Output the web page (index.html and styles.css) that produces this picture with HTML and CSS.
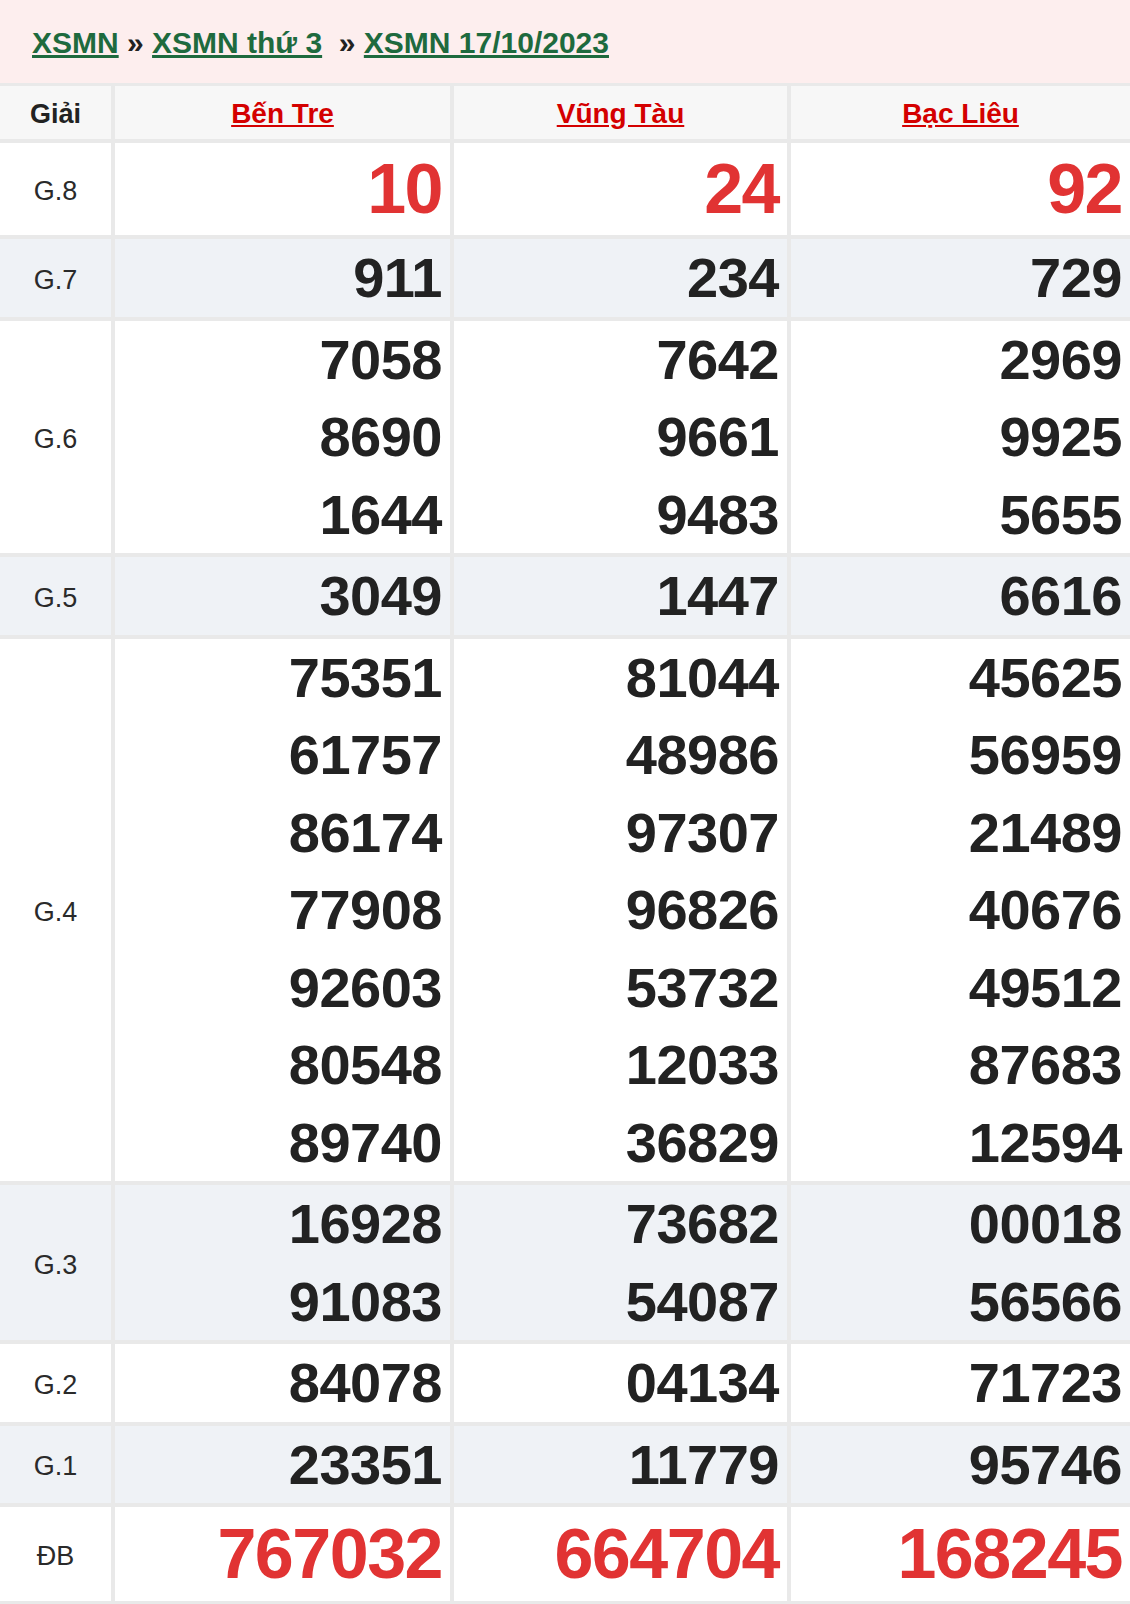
FILE: index.html
```html
<!DOCTYPE html>
<html lang="vi">
<head>
<meta charset="utf-8">
<title>XSMN 17/10/2023</title>
<link rel="stylesheet" href="styles.css">
</head>
<body>
<div class="crumbs"><a href="#">XSMN</a><span class="sep"> » </span><a href="#">XSMN thứ 3</a><span class="sep">&nbsp; » </span><a href="#">XSMN 17/10/2023</a></div>
<div class="board">
  <div class="cell head lbl"><b>Giải</b></div>
  <div class="cell head"><a href="#">Bến Tre</a></div>
  <div class="cell head"><a href="#">Vũng Tàu</a></div>
  <div class="cell head"><a href="#">Bạc Liêu</a></div>

  <div class="cell lbl">G.8</div>
  <div class="cell num big"><div>10</div></div>
  <div class="cell num big"><div>24</div></div>
  <div class="cell num big"><div>92</div></div>

  <div class="cell lbl alt">G.7</div>
  <div class="cell num alt"><div>911</div></div>
  <div class="cell num alt"><div>234</div></div>
  <div class="cell num alt"><div>729</div></div>

  <div class="cell lbl">G.6</div>
  <div class="cell num"><div>7058</div><div>8690</div><div>1644</div></div>
  <div class="cell num"><div>7642</div><div>9661</div><div>9483</div></div>
  <div class="cell num"><div>2969</div><div>9925</div><div>5655</div></div>

  <div class="cell lbl alt">G.5</div>
  <div class="cell num alt"><div>3049</div></div>
  <div class="cell num alt"><div>1447</div></div>
  <div class="cell num alt"><div>6616</div></div>

  <div class="cell lbl">G.4</div>
  <div class="cell num"><div>75351</div><div>61757</div><div>86174</div><div>77908</div><div>92603</div><div>80548</div><div>89740</div></div>
  <div class="cell num"><div>81044</div><div>48986</div><div>97307</div><div>96826</div><div>53732</div><div>12033</div><div>36829</div></div>
  <div class="cell num"><div>45625</div><div>56959</div><div>21489</div><div>40676</div><div>49512</div><div>87683</div><div>12594</div></div>

  <div class="cell lbl alt">G.3</div>
  <div class="cell num alt"><div>16928</div><div>91083</div></div>
  <div class="cell num alt"><div>73682</div><div>54087</div></div>
  <div class="cell num alt"><div>00018</div><div>56566</div></div>

  <div class="cell lbl">G.2</div>
  <div class="cell num"><div>84078</div></div>
  <div class="cell num"><div>04134</div></div>
  <div class="cell num"><div>71723</div></div>

  <div class="cell lbl alt">G.1</div>
  <div class="cell num alt"><div>23351</div></div>
  <div class="cell num alt"><div>11779</div></div>
  <div class="cell num alt"><div>95746</div></div>

  <div class="cell lbl">ĐB</div>
  <div class="cell num big db"><div>767032</div></div>
  <div class="cell num big db"><div>664704</div></div>
  <div class="cell num big db"><div>168245</div></div>
</div>
</body>
</html>
```
FILE: styles.css
```css
* { box-sizing: border-box; }
html, body { margin: 0; padding: 0; background: #fff; }
body {
  font-family: "Liberation Sans", Arial, sans-serif;
  color: #222;
  width: 1130px;
}
.crumbs {
  height: 83px;
  background: #fdeeee;
  padding: 2px 0 0 32px;
  line-height: 81px;
  font-size: 30px;
  font-weight: bold;
  white-space: nowrap;
}
.crumbs a { color: #1e6a3e; text-decoration: underline; }
.crumbs .sep { color: #222; }
.board {
  display: grid;
  grid-template-columns: 111px 335px 333px 1fr;
  gap: 4px;
  background: #e9e9e9;
  border-top: 3px solid #e9e9e9;
  border-bottom: 4px solid #e9e9e9;
}
.cell { background: #fff; }
.cell.alt { background: #eff2f6; }
.cell.head {
  background: #f7f7f7;
  height: 53px;
  display: flex;
  align-items: center;
  justify-content: center;
  font-size: 28px;
  font-weight: bold;
  padding-top: 3px;
}
.cell.head a { color: #d40000; text-decoration: underline; }
.cell.head b { color: #222; }
.cell.lbl {
  display: flex;
  align-items: center;
  justify-content: center;
  font-size: 27px;
  padding-top: 5px;
  color: #2a2a2a;
}
.cell.head.lbl { font-size: 27px; padding-top: 3px; }
.cell.num {
  text-align: right;
  padding-right: 8px;
  font-weight: bold;
  font-size: 56px;
  line-height: 77.5px;
  letter-spacing: -0.5px;
}
.cell.big {
  font-size: 70px;
  line-height: 92px;
  letter-spacing: -1.5px;
  color: #e13333;
}
.cell.big.db { line-height: 94px; }
```
